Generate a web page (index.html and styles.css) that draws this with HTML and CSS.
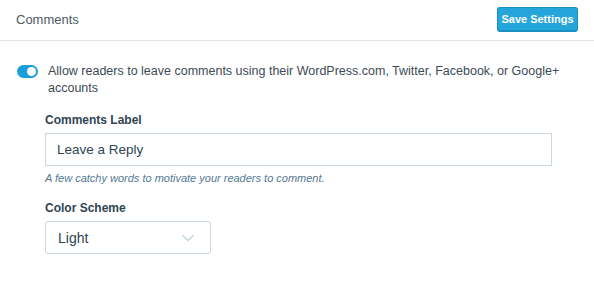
FILE: index.html
```html
<!DOCTYPE html>
<html lang="en">
<head>
  <meta charset="UTF-8">
  <meta name="viewport" content="width=device-width, initial-scale=1.0">
  <title>Comments</title>
  <link rel="stylesheet" href="styles.css">
</head>
<body>
  <!-- header bar -->
  <div class="card-header">
    <span class="card-title">Comments</span>
    <button class="button-primary">Save Settings</button>
  </div>

  <div class="card-body">
    <label class="toggle-row">
      <span class="toggle"></span>
      <span class="toggle-label">Allow readers to leave comments using their WordPress.com, Twitter, Facebook, or Google+ accounts</span>
    </label>

    <div class="field">
      <div class="field-label">Comments Label</div>
      <input class="text-input" type="text" value="Leave a Reply">
      <div class="field-hint">A few catchy words to motivate your readers to comment.</div>
    </div>

    <div class="field">
      <div class="field-label">Color Scheme</div>
      <div class="select">
        <span>Light</span>
        <svg width="14" height="8" viewBox="0 0 14 8"><path d="M1 1l6 5.5L13 1" fill="none" stroke="#c8d7e1" stroke-width="1.6"/></svg>
      </div>
    </div>
  </div>
</body>
</html>
```

FILE: styles.css
```css
/* base */
body {
  margin: 0;
  font-family: "Liberation Sans", Arial, sans-serif;
  color: #2e4453;
  background: #fff;
}

/* header */
.card-header {
  height: 41px;
  box-sizing: border-box;
  border-bottom: 1px solid #dfe6ec;
  display: flex;
  align-items: center;
  justify-content: space-between;
  padding: 0 16px 2px 16px;
}

.card-title {
  font-size: 13px;
  color: #4f5a63;
}

.button-primary {
  height: 25px;
  width: 81px;
  padding: 0;
  border: 1px solid #1a8fc1;
  border-bottom-width: 2px;
  border-radius: 3px;
  background: #25a6db;
  color: #fff;
  font-family: inherit;
  font-size: 11px;
  font-weight: 700;
}

/* body */
.card-body {
  padding: 22px 16px 0 17px;
}

.toggle-row {
  display: flex;
  align-items: flex-start;
  gap: 10px;
  font-size: 12.5px;
  line-height: 17px;
  color: #3d4a54;
}

.toggle {
  flex: none;
  width: 21px;
  height: 13px;
  margin-top: 2px;
  border-radius: 7px;
  background: #1a9fd9;
  position: relative;
}

.toggle::after {
  content: "";
  position: absolute;
  right: 2px;
  top: 2px;
  width: 9px;
  height: 9px;
  border-radius: 50%;
  background: #fff;
}

.field {
  margin-left: 28px;
  margin-top: 16px;
}

.field + .field {
  margin-top: 17px;
}

.field-label {
  font-size: 12px;
  font-weight: 700;
  color: #2e4453;
  margin-bottom: 6px;
}

.text-input {
  display: block;
  box-sizing: border-box;
  width: 507px;
  height: 33px;
  margin: 0;
  padding: 0 11px;
  border: 1px solid #c8d7e1;
  font-family: inherit;
  font-size: 13.5px;
  color: #2e4453;
  outline: none;
}

.field-hint {
  margin-top: 6px;
  font-size: 11px;
  font-style: italic;
  color: #537994;
}

.select {
  box-sizing: border-box;
  width: 166px;
  height: 33px;
  border: 1px solid #c8d7e1;
  border-radius: 3px;
  display: flex;
  align-items: center;
  justify-content: space-between;
  padding: 0 15px 0 12px;
  font-size: 14px;
  color: #2e4453;
}
```
